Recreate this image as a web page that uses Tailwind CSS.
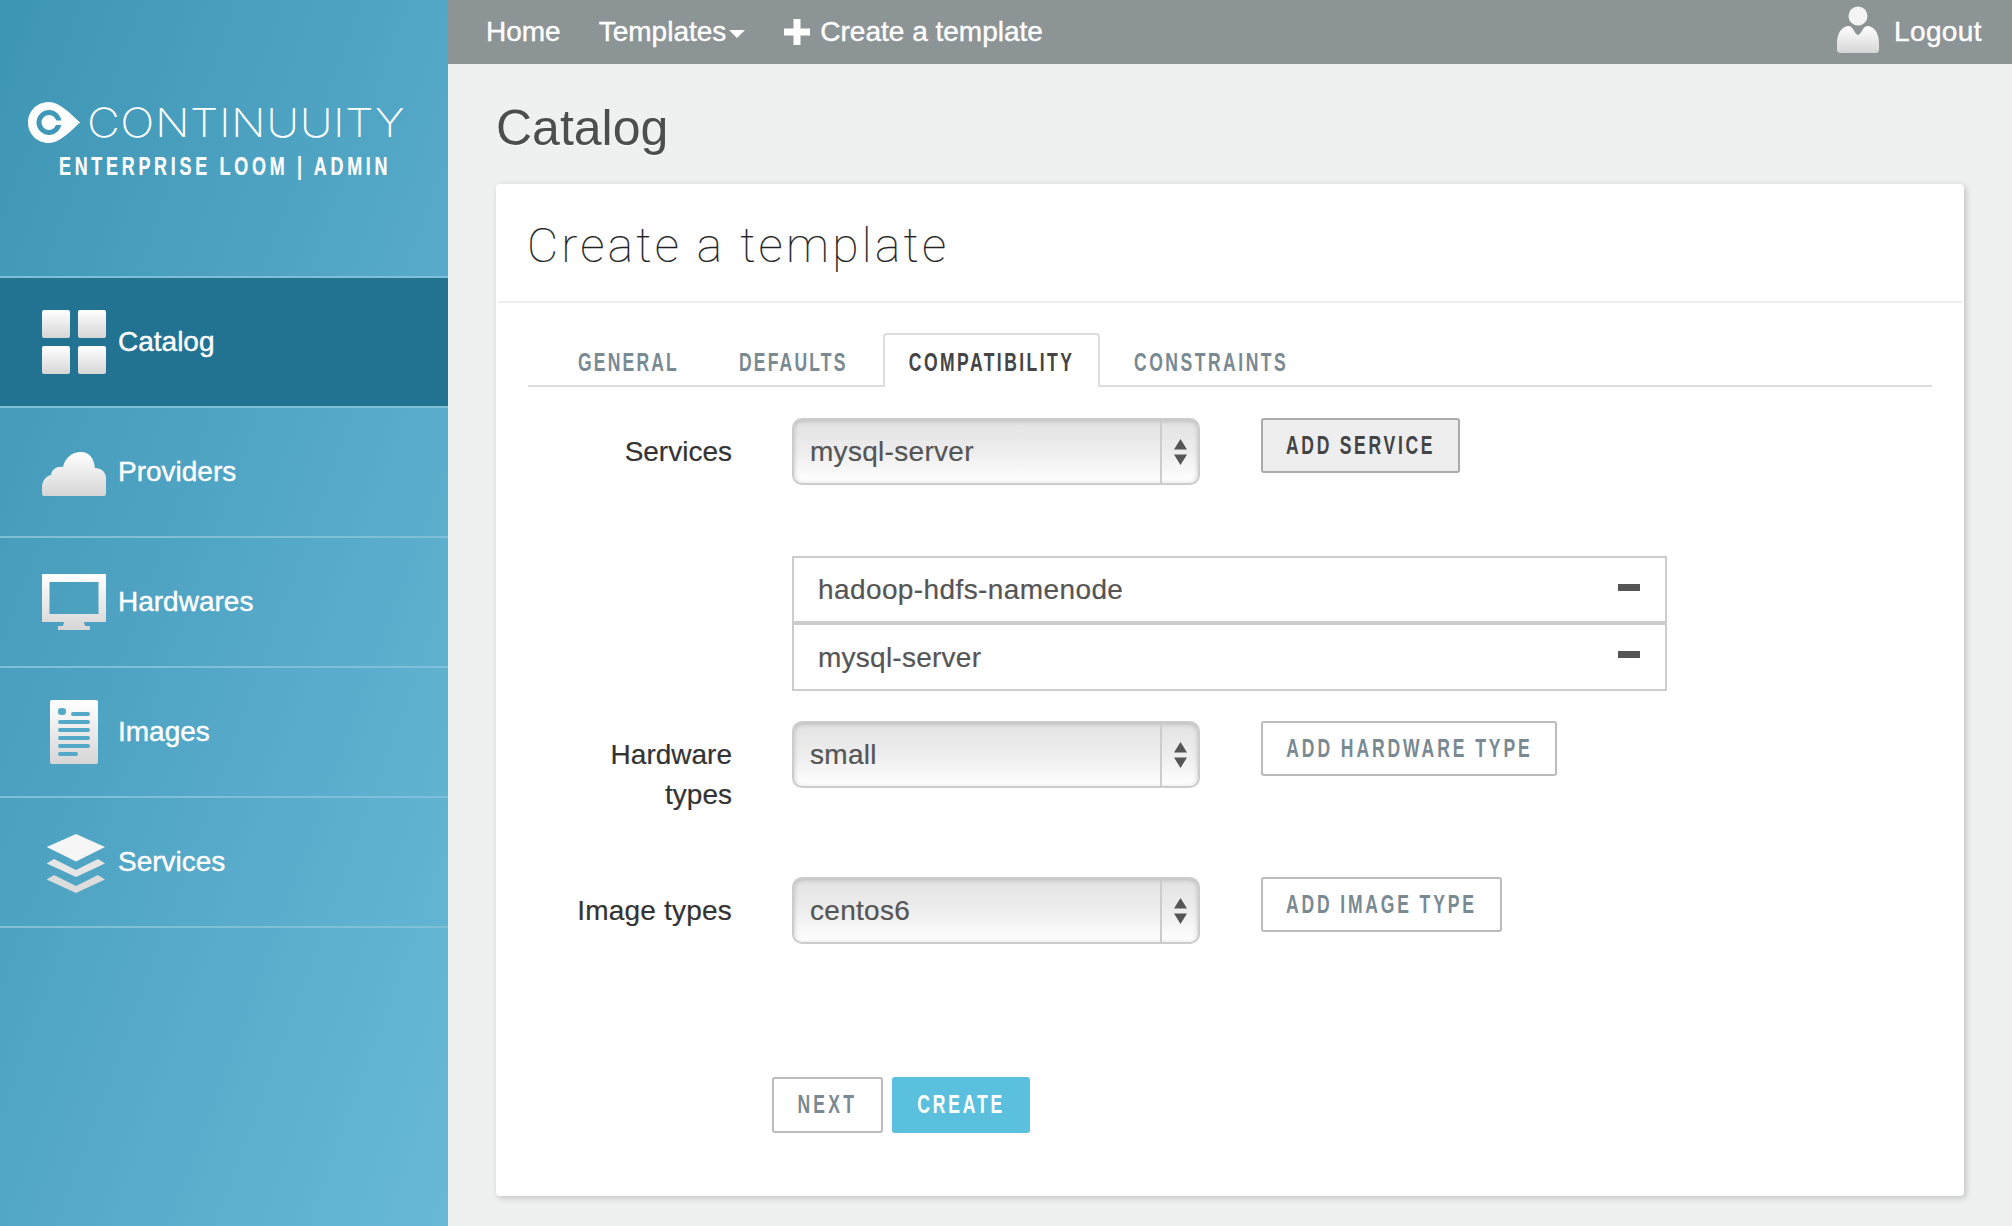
<!DOCTYPE html>
<html lang="en">
<head>
    <meta charset="UTF-8">
    <title>Catalog - Create a template</title>
    <script src="https://cdn.jsdelivr.net/npm/@tailwindcss/browser@4"></script>
</head>
<body class="font-['Liberation_Sans',Arial,sans-serif] text-[28px] leading-10 bg-[#eff1f0] text-[#333]">
<svg width="0" height="0" class="absolute">
    <defs>
        <linearGradient id="iconFill" x1="0" y1="0" x2="0" y2="1">
            <stop offset="0" stop-color="#ffffff"/>
            <stop offset="1" stop-color="#d6d6d6"/>
        </linearGradient>
    </defs>
</svg>
<div class="flex h-[1226px] w-[2012px] overflow-hidden">

    <!-- Sidebar -->
    <aside class="w-[448px] shrink-0 bg-linear-to-br from-[#3d95b4] to-[#68b9d8] text-white [-webkit-text-stroke:0.4px_white]">
        <div class="h-[276px] pt-[102px]">
            <div class="flex items-center pl-[28px] h-[41px]">
                <svg width="52" height="41" viewBox="0 0 52 41" class="shrink-0">
                    <path d="M21 0 C31 0 42 11 52 20.500 C42 30 31 41 21 41 C9 41 0 32 0 20.500 C0 9 9 0 21 0 Z" fill="#fff"/>
                    <circle cx="21" cy="20.500" r="10" fill="none" stroke="#3f98b7" stroke-width="5"/>
                    <rect x="20" y="18.500" width="17" height="4.500" rx="2.200" fill="#fff"/>
                </svg>
                <span class="ml-[7px] inline-block origin-left scale-x-[1.13] whitespace-nowrap font-['Inter'] font-extralight text-[40px] leading-none tracking-[0.5px] [-webkit-text-stroke:0]">CONTINUUITY</span>
            </div>
            <div class="mt-[3px] pl-[59px] h-8">
                <span class="inline-block origin-left scale-x-[0.69] whitespace-nowrap font-bold text-[26px] leading-8 tracking-[5.400px] [-webkit-text-stroke:0.2px_white]">ENTERPRISE LOOM | ADMIN</span>
            </div>
        </div>
        <nav class="border-t-2 border-[#7fc0d8]">
            <a class="flex items-center h-[128px] pl-[42px] gap-3 bg-[#227392] border-b-2 border-[#7fc0d8] box-content">
                <svg width="64" height="64" viewBox="0 0 64 64" fill="url(#iconFill)">
                    <rect x="0" y="0" width="28" height="28" rx="2"/><rect x="36" y="0" width="28" height="28" rx="2"/>
                    <rect x="0" y="36" width="28" height="28" rx="2"/><rect x="36" y="36" width="28" height="28" rx="2"/>
                </svg>
                <span>Catalog</span>
            </a>
            <a class="flex items-center h-[128px] pl-[42px] gap-3 border-b-2 border-[#7fc0d8] box-content">
                <svg width="64" height="64" viewBox="0 0 64 64" fill="url(#iconFill)">
                    <path d="M2 56 Q0 56 0 53 V47 C0 41 4 36 9 35 C10 29 15 26 21 27 C23 18 30 12 39 12 C48 12 52 19 53 28 C59 28 64 32 64 38 V53 Q64 56 62 56 Z"/>
                </svg>
                <span>Providers</span>
            </a>
            <a class="flex items-center h-[128px] pl-[42px] gap-3 border-b-2 border-[#7fc0d8] box-content">
                <svg width="64" height="64" viewBox="0 0 64 64" fill="url(#iconFill)">
                    <path fill-rule="evenodd" d="M0 4 H64 V52 H42 L43 56 H47 Q48 56 48 57 V60 H16 V57 Q16 56 17 56 H21 L22 52 H0 Z M7.500 12 V44 H56.500 V12 Z"/>
                </svg>
                <span>Hardwares</span>
            </a>
            <a class="flex items-center h-[128px] pl-[42px] gap-3 border-b-2 border-[#7fc0d8] box-content">
                <svg width="64" height="64" viewBox="0 0 64 64">
                    <rect x="8" y="0" width="48" height="64" rx="2" fill="url(#iconFill)"/>
                    <g fill="#55a9c8">
                        <rect x="16" y="8" width="8" height="7" rx="3"/><rect x="29" y="12" width="19" height="4" rx="2"/>
                        <rect x="16" y="20" width="32" height="4" rx="2"/><rect x="16" y="28" width="32" height="4" rx="2"/>
                        <rect x="16" y="36" width="32" height="4" rx="2"/><rect x="16" y="44" width="32" height="4" rx="2"/>
                        <rect x="16" y="52" width="20" height="4" rx="2"/>
                    </g>
                </svg>
                <span>Images</span>
            </a>
            <a class="flex items-center h-[128px] pl-[42px] gap-3 border-b-2 border-[#7fc0d8] box-content">
                <svg width="64" height="64" viewBox="0 0 64 64">
                    <path d="M34 4 L63 17 L34 31.500 L4.700 17 Z" fill="#f6f6f6"/>
                    <path d="M12 29 L34 40 L56 29 L63 33.500 L34 47 L4.700 33.500 Z" fill="#e6e6e6"/>
                    <path d="M12 45 L34 56 L56 45 L63 49.500 L34 63 L4.700 49.500 Z" fill="#dcdcdc"/>
                </svg>
                <span>Services</span>
            </a>
        </nav>
    </aside>

    <div class="flex-1 flex flex-col min-w-0">
        <!-- Top bar -->
        <header class="h-16 shrink-0 bg-[#8c9496] text-white flex items-center pl-[38px] pr-[30px] [-webkit-text-stroke:0.4px_white]">
            <a>Home</a>
            <a class="ml-[38px] flex items-center">Templates<span class="ml-[3px] mt-1 border-x-[8px] border-t-[8px] border-x-transparent border-t-white"></span></a>
            <a class="ml-[39px] flex items-center gap-[10px]">
                <svg width="26" height="26" viewBox="0 0 26 26" fill="#fff"><path d="M9.500 0 H16.500 V9.500 H26 V16.500 H16.500 V26 H9.500 V16.500 H0 V9.500 H9.500 Z"/></svg>
                Create a template
            </a>
            <a class="ml-auto flex items-center gap-[15px] tracking-[0.4px]">
                <svg width="42" height="48" viewBox="0 0 42 48" class="mt-[-6px]" fill="url(#iconFill)">
                    <circle cx="21" cy="11" r="9.500" fill="#f4f4f4"/>
                    <path d="M0 38 C0 28 5 21 12 21 C16 21 18 30 21 30 C24 30 26 21 30 21 C37 21 42 28 42 38 V45 Q42 48 38 48 H4 Q0 48 0 45 Z"/>
                </svg>
                Logout
            </a>
        </header>

        <main class="flex-1 pl-[48px] pr-[48px]">
            <h1 class="h-[120px] pt-[38px] text-[50px] leading-[52px] text-[#4d4d4d] [text-shadow:0_1px_0_#fff]">Catalog</h1>

            <section class="h-[1012px] bg-white rounded-[4px] shadow-[2px_2px_6px_rgba(0,0,0,0.2)] [-webkit-text-stroke:0.2px]">
                <h2 class="h-[119px] pl-[29px] pt-[34px] mx-[2px] border-b-2 border-[#eeeeee] font-['Roboto'] font-thin text-[48px] leading-[56px] tracking-[3.250px] text-[#222] [-webkit-text-stroke:0.2px_#222]">Create a template</h2>

                <div class="px-[32px]">
                    <!-- Tabs -->
                    <div class="mt-[30px] h-[54px] flex items-end border-b-2 border-[#dddddd] font-bold text-[26px] text-[#7a8a92] [-webkit-text-stroke:0]">
                        <a class="ml-[50px] w-[100px] h-[43px] whitespace-nowrap"><span class="inline-block origin-left scale-x-[0.675] leading-8 tracking-[3.200px]">GENERAL</span></a>
                        <a class="ml-[61px] w-[106px] h-[43px] whitespace-nowrap"><span class="inline-block origin-left scale-x-[0.675] leading-8 tracking-[3.200px]">DEFAULTS</span></a>
                        <a class="ml-[38px] w-[217px] h-[54px] mb-[-2px] flex justify-center bg-white border-2 border-b-0 border-[#dddddd] rounded-t-[4px] pt-[11px] text-[#444]"><span class="inline-block shrink-0 scale-x-[0.675] whitespace-nowrap leading-8 tracking-[3.600px]">COMPATIBILITY</span></a>
                        <a class="ml-[34px] w-[153px] h-[43px] whitespace-nowrap"><span class="inline-block origin-left scale-x-[0.675] leading-8 tracking-[3.700px]">CONSTRAINTS</span></a>
                    </div>

                    <!-- Services -->
                    <div class="mt-[31px] flex items-start">
                        <label class="w-[204px] text-right pt-[14px]">Services</label>
                        <div class="ml-[60px] w-[408px] h-[67px] flex rounded-[10px] border-2 border-[#cccccc] bg-linear-to-b from-[#e3e3e3] via-[#ededed] to-white shadow-[inset_0_1px_5px_rgba(0,0,0,0.2)] text-[#555] tracking-[0.3px]">
                            <span class="flex-1 pl-[16px] pt-[12px]">mysql-server</span>
                            <span class="w-[38px] border-l-2 border-[#cccccc] flex items-center justify-center">
                                <svg width="13" height="26" viewBox="0 0 13 26" fill="#555"><path d="M6.500 0 L13 10.500 H0 Z M6.500 26 L13 15.500 H0 Z"/></svg>
                            </span>
                        </div>
                        <button class="ml-[61px] h-[55px] w-[199px] pb-[2px] flex items-center justify-center rounded-[3px] border-2 border-[#aaaaaa] bg-[#eeeeee] font-bold text-[26px] text-[#444] [-webkit-text-stroke:0]"><span class="inline-block shrink-0 scale-x-[0.675] whitespace-nowrap tracking-[4px]">ADD SERVICE</span></button>
                    </div>

                    <!-- Selected services -->
                    <ul class="mt-[71px] ml-[264px] w-[875px] text-[#555]">
                        <li class="h-[69px] border-2 border-b-4 border-[#cccccc] flex items-center justify-between pl-[24px] pr-[25px] tracking-[0.4px]">
                            hadoop-hdfs-namenode
                            <span class="w-[22px] h-[7px] mt-[-4px] bg-[#555]"></span>
                        </li>
                        <li class="h-[66px] pt-[2px] border-2 border-t-0 border-[#cccccc] flex items-center justify-between pl-[24px] pr-[25px] tracking-[0.25px]">
                            mysql-server
                            <span class="w-[22px] h-[7px] mb-[7px] bg-[#555]"></span>
                        </li>
                    </ul>

                    <!-- Hardware types -->
                    <div class="mt-[30px] flex items-start">
                        <label class="w-[204px] text-right pt-[14px]">Hardware<br>types</label>
                        <div class="ml-[60px] w-[408px] h-[67px] flex rounded-[10px] border-2 border-[#cccccc] bg-linear-to-b from-[#e3e3e3] via-[#ededed] to-white shadow-[inset_0_1px_5px_rgba(0,0,0,0.2)] text-[#555] tracking-[0.3px]">
                            <span class="flex-1 pl-[16px] pt-[12px]">small</span>
                            <span class="w-[38px] border-l-2 border-[#cccccc] flex items-center justify-center">
                                <svg width="13" height="26" viewBox="0 0 13 26" fill="#555"><path d="M6.500 0 L13 10.500 H0 Z M6.500 26 L13 15.500 H0 Z"/></svg>
                            </span>
                        </div>
                        <button class="ml-[61px] h-[55px] w-[296px] pb-[2px] flex items-center justify-center rounded-[3px] border-2 border-[#bbbbbb] bg-white font-bold text-[26px] text-[#7a8a92] [-webkit-text-stroke:0]"><span class="inline-block shrink-0 scale-x-[0.675] whitespace-nowrap tracking-[4.300px]">ADD HARDWARE TYPE</span></button>
                    </div>

                    <!-- Image types -->
                    <div class="mt-[62px] flex items-start">
                        <label class="w-[204px] text-right pt-[14px] tracking-[0.2px]">Image types</label>
                        <div class="ml-[60px] w-[408px] h-[67px] flex rounded-[10px] border-2 border-[#cccccc] bg-linear-to-b from-[#e3e3e3] via-[#ededed] to-white shadow-[inset_0_1px_5px_rgba(0,0,0,0.2)] text-[#555] tracking-[0.3px]">
                            <span class="flex-1 pl-[16px] pt-[12px]">centos6</span>
                            <span class="w-[38px] border-l-2 border-[#cccccc] flex items-center justify-center">
                                <svg width="13" height="26" viewBox="0 0 13 26" fill="#555"><path d="M6.500 0 L13 10.500 H0 Z M6.500 26 L13 15.500 H0 Z"/></svg>
                            </span>
                        </div>
                        <button class="ml-[61px] h-[55px] w-[241px] pb-[2px] flex items-center justify-center rounded-[3px] border-2 border-[#bbbbbb] bg-white font-bold text-[26px] text-[#7a8a92] [-webkit-text-stroke:0]"><span class="inline-block shrink-0 scale-x-[0.675] whitespace-nowrap tracking-[4.200px]">ADD IMAGE TYPE</span></button>
                    </div>

                    <!-- Actions -->
                    <div class="mt-[133px] ml-[244px] flex gap-[9px] font-bold text-[26px] [-webkit-text-stroke:0]">
                        <button class="h-[56px] w-[111px] pb-[2px] flex items-center justify-center rounded-[3px] border-2 border-[#bbbbbb] bg-white text-[#7a8a92]"><span class="inline-block shrink-0 scale-x-[0.675] whitespace-nowrap tracking-[4.800px]">NEXT</span></button>
                        <button class="h-[56px] w-[138px] pb-[2px] flex items-center justify-center rounded-[3px] bg-[#5bc0de] text-white"><span class="inline-block shrink-0 scale-x-[0.675] whitespace-nowrap tracking-[4.200px]">CREATE</span></button>
                    </div>
                </div>
            </section>
        </main>
    </div>
</div>
</body>
</html>
